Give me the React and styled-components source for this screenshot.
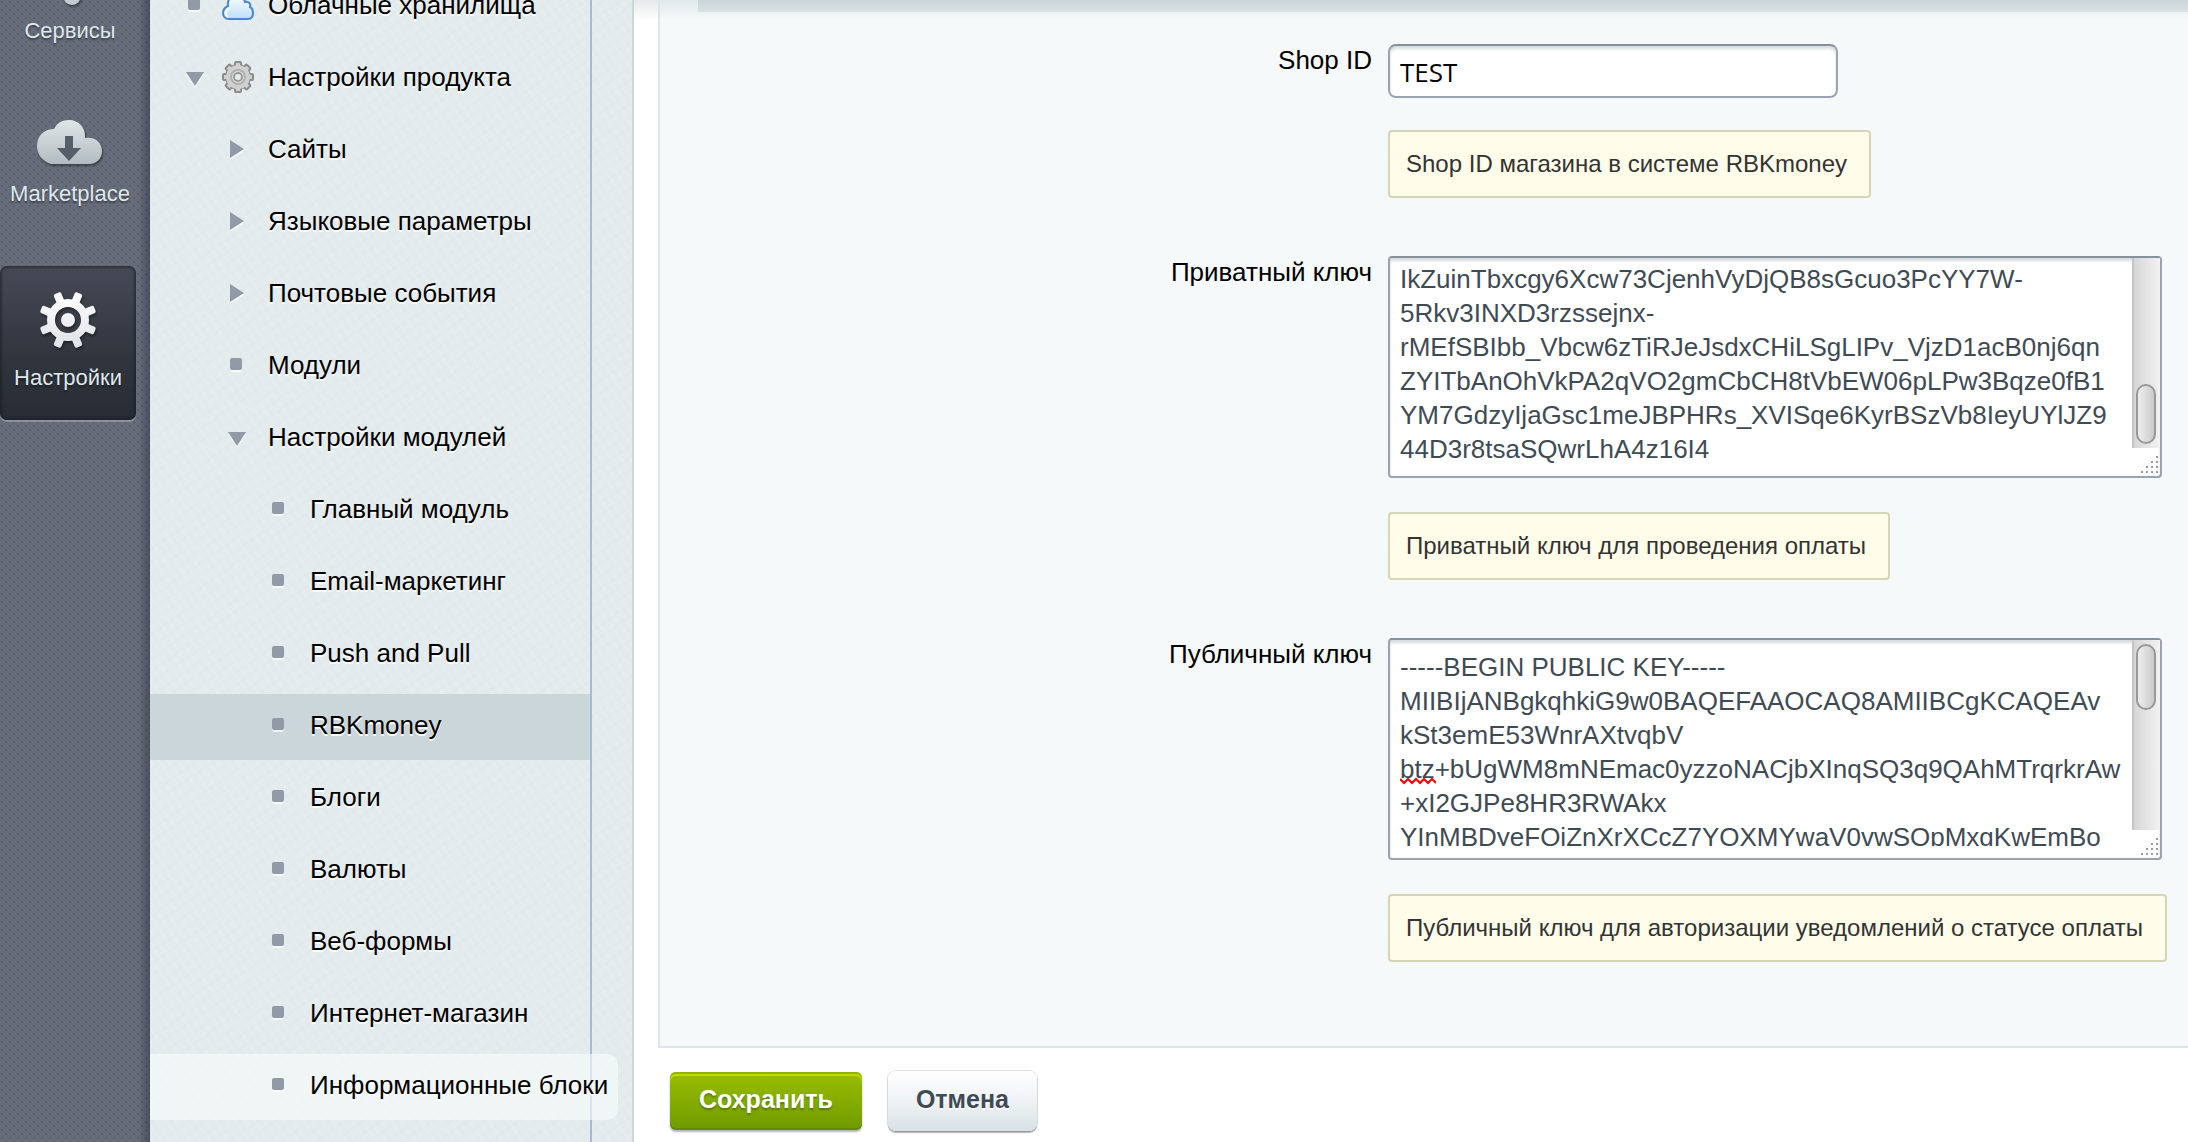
import React from "react";
import styled, { createGlobalStyle, css } from "styled-components";

const sans = '"Liberation Sans", Arial, sans-serif';

const GlobalStyle = createGlobalStyle`
  *, *::before, *::after { box-sizing: border-box; }
  html, body { margin: 0; background: #fff; overflow: hidden; }
  body { font-family: ${sans}; font-size: 26px; color: #000; }
  ul { margin: 0; padding: 0; list-style: none; }
  a { color: inherit; text-decoration: none; }
`;

const Page = styled.div`
  display: flex;
  height: 100vh;
  overflow: hidden;
`;

/* Section rail */

const Rail = styled.nav`
  flex: none;
  width: 150px;
  overflow: hidden;
  background-color: #666c7a;
  background-image:
    linear-gradient(to left, rgba(40, 45, 60, 0.45), rgba(40, 45, 60, 0) 12px),
    radial-gradient(circle at 2px 2px, #5a5f6c 1px, transparent 1px),
    radial-gradient(circle at 6px 6px, #5a5f6c 1px, transparent 1px);
  background-size: 100% 100%, 8px 8px, 8px 8px;
`;

const RailList = styled.ul`
  display: flex;
  flex-direction: column;
  gap: 30px;
  margin-top: -60px;
`;

const RailLink = styled.a`
  display: flex;
  flex-direction: column;
  align-items: center;
  gap: 16px;
  width: 140px;
  padding: 17px 0 28px;
  color: #dfe8ec;
  font-size: 22px;
  line-height: 28px;
  text-shadow: 0 2px 2px rgba(0, 0, 0, 0.4);

  svg {
    display: block;
    overflow: visible;
    filter: drop-shadow(1px 2px 1px rgba(0, 0, 0, 0.4));
  }

  ${({ $active }) => $active && css`
    width: 136px;
    padding-top: 26px;
    border-radius: 7px;
    background: linear-gradient(#454a56, #30343d 62%, #272b33);
    box-shadow: inset 0 0 2px 2px rgba(25, 28, 36, 0.5), 0 2px 0 #8e949f;
  `}
`;

/* Tree */

const Sidebar = styled.nav`
  flex: none;
  display: flex;
  width: 484px;
  overflow: hidden;
  border-right: 2px solid #cbd7d9;
  background-color: #e3ebed;
  background-image:
    repeating-linear-gradient(55deg, rgba(255, 255, 255, 0.08) 0 3px, transparent 3px 8px),
    repeating-linear-gradient(-35deg, rgba(200, 214, 214, 0.07) 0 3px, transparent 3px 10px);
`;

const Tree = styled.ul`
  display: flex;
  flex-direction: column;
  gap: 6px;
  width: 442px;
  margin-top: -26px;
  border-right: 2px solid #a3bccf;
`;

const rowState = {
  selected: css`background: #cbd6da;`,
  hovered: css`
    margin-right: -28px;
    border-radius: 0 10px 10px 0;
    background: rgba(249, 251, 252, 0.62);
  `,
};

const TreeLink = styled.a`
  display: flex;
  align-items: center;
  height: 66px;
  padding: 0 0 4px ${({ $level }) => 36 + 42 * $level}px;
  line-height: 34px;
  white-space: nowrap;
  text-shadow: 0 2px 0 #fff;
  ${({ $state }) => rowState[$state]}
`;

const Marker = styled.svg`
  flex: none;
  width: 18px;
  height: 18px;
  margin-right: 18px;
  overflow: visible;
  fill: #929aa7;
  filter: drop-shadow(0 2px 0 rgba(255, 255, 255, 0.7));
`;

const RowIcon = styled.svg`
  flex: none;
  width: 32px;
  height: 32px;
  margin-right: 10px;
`;

const RowText = styled.span`
  padding-left: 4px;
`;

/* Settings form */

const Content = styled.main`
  flex: 1;
  min-width: 0;
  padding-left: 24px;
  background: linear-gradient(#e6e9ea, #fff 20px);
`;

const Panel = styled.section`
  border: solid #dbe6eb;
  border-width: 0 0 2px 2px;
  background: linear-gradient(#e2e9eb, #f5f9f9 20px);
`;

const PanelBand = styled.div`
  height: 12px;
  margin-left: 38px;
  background: linear-gradient(#cad5d8, #d9e2e4);
`;

const Fields = styled.div`
  display: flex;
  flex-direction: column;
  gap: 58px;
  padding: 32px 0 84px;
`;

const FieldRow = styled.div`
  display: grid;
  grid-template-columns: minmax(0, 1fr) 800px;
`;

const FieldLabel = styled.label`
  padding-right: 16px;
  line-height: 32px;
  text-align: right;
`;

const FieldBody = styled.div`
  display: flex;
  flex-direction: column;
  align-items: flex-start;
`;

const frame = css`
  border: 2px solid #9ba3b1;
  border-top-color: #87909e;
  background: #fff;
  box-shadow: inset 0 3px 3px rgba(120, 130, 140, 0.28);
`;

const TextInput = styled.input`
  ${frame}
  width: 450px;
  height: 54px;
  margin-bottom: 32px;
  padding: 2px 10px 0;
  border-radius: 8px;
  color: #000;
  font: 26px "Open Sans", "Noto Sans", sans-serif;
  outline: none;
`;

const AreaFrame = styled.div`
  ${frame}
  position: relative;
  width: 774px;
  height: 222px;
  margin-bottom: 34px;
  padding-right: 28px;
  border-radius: 4px;
`;

const Area = styled.textarea`
  display: block;
  width: 100%;
  height: 206px;
  padding: ${({ $scrolled }) => ($scrolled ? 4 : 10)}px 0 0 10px;
  border: 0;
  background: transparent;
  color: #3f4b54;
  font: 26px/34px ${sans};
  white-space: pre;
  overflow: hidden;
  resize: none;
  outline: none;
`;

const ScrollTrack = styled.div`
  position: absolute;
  top: 0;
  right: 0;
  display: flex;
  align-items: ${({ $scrolled }) => ($scrolled ? "flex-end" : "flex-start")};
  width: 28px;
  height: 190px;
  padding: 4px;
  background: linear-gradient(to right, #c6c6c6 2px, #d6d6d6 2px, #f2f2f2);
`;

const ScrollThumb = styled.div`
  width: 20px;
  height: ${({ $scrolled }) => ($scrolled ? 60 : 66)}px;
  border: 2px solid #989898;
  border-radius: 10px;
  background: linear-gradient(to right, #eee, #cbcbcb);
`;

const Grip = styled.svg`
  position: absolute;
  right: 1px;
  bottom: 2px;
  width: 20px;
  height: 20px;
  fill: #9a9a9a;
`;

const Squiggle = styled.svg`
  position: absolute;
  top: 137px;
  left: 10px;
  width: 36px;
  height: 8px;
  fill: none;
  stroke: #f00;
  stroke-width: 2px;
`;

const Note = styled.p`
  margin: 0;
  padding: 16px 22px 16px 16px;
  border: 2px solid #d7d5b8;
  border-radius: 4px;
  background: #fffde9;
  color: #333;
  font-size: 24px;
  line-height: 32px;
  white-space: nowrap;
`;

const Actions = styled.div`
  display: flex;
  align-items: center;
  gap: 26px;
  padding: 23px 0 0 12px;
`;

const Button = styled.button`
  height: 60px;
  padding: 0 28px 4px;
  border: 0;
  border-radius: 8px;
  background: linear-gradient(#fff, #f1f4f6 45%, #d8e1e6);
  box-shadow: 0 0 0 1px rgba(0, 0, 0, 0.12), 0 2px 1px rgba(0, 0, 0, 0.3);
  color: #3f4b54;
  font: bold 25px ${sans};
  text-shadow: 0 2px 0 rgba(255, 255, 255, 0.7);

  ${({ $primary }) => $primary && css`
    height: 58px;
    padding: 0 29px 4px;
    border-radius: 6px;
    background: linear-gradient(#9bbe00, #6f9b00);
    box-shadow: inset 0 2px 0 #93b300, inset 0 4px 0 #c3db00, inset 0 -2px 0 #648a00,
      0 2px 2px rgba(0, 0, 0, 0.3);
    color: #fff;
    text-shadow: 0 2px 2px rgba(60, 90, 0, 0.6);
  `}
`;

/* Drawings */

const teeth = [0, 45, 90, 135, 180, 225, 270, 315];

function MarketIcon() {
  return (
    <svg width="66" height="44" viewBox="0 0 66 44" aria-hidden="true">
      <defs>
        <linearGradient id="market" gradientUnits="userSpaceOnUse" x1="0" y1="0" x2="0" y2="44">
          <stop offset="0" stopColor="#e0e6e8" />
          <stop offset="1" stopColor="#b2bcc0" />
        </linearGradient>
      </defs>
      <path
        d="M14 44C5 41 0 34 0 26C0 16 7 9 17 9C20 3 25 0 32 0C42 0 49 8 48 18C58 16 65 23 65 31C65 38 60 44 52 44Z"
        fill="url(#market)"
      />
      <path d="M28 16h8v12h8L32 41 20 28h8z" fill="#565d6b" />
    </svg>
  );
}

function ServicesIcon() {
  return (
    <svg width="60" height="44" viewBox="0 0 60 44" aria-hidden="true">
      <circle cx="32" cy="39" r="9" fill="#c3cbcf" />
    </svg>
  );
}

function SettingsIcon() {
  return (
    <svg width="56" height="56" viewBox="-28 -28 56 56" aria-hidden="true">
      <defs>
        <linearGradient id="cog" gradientUnits="userSpaceOnUse" x1="0" y1="-28" x2="0" y2="28">
          <stop offset="0" stopColor="#fff" />
          <stop offset="1" stopColor="#dfe3e7" />
        </linearGradient>
        <mask id="cogMask">
          <g fill="#fff">
            <circle r="21" />
            {teeth.map((a) => (
              <rect key={a} x="-4" y="-29" width="8" height="14" rx="2" transform={`rotate(${a + 22.5})`} />
            ))}
          </g>
          <circle r="10" fill="none" stroke="#000" strokeWidth="6" />
        </mask>
      </defs>
      <rect x="-30" y="-30" width="60" height="60" fill="url(#cog)" mask="url(#cogMask)" />
    </svg>
  );
}

function SmallCogIcon() {
  return (
    <RowIcon viewBox="-16 -16 32 32" aria-hidden="true">
      <g fill="#8c8c8c">
        <circle r="13" />
        {teeth.map((a) => (
          <rect key={a} x="-4" y="-16" width="8" height="10" rx="2" transform={`rotate(${a})`} />
        ))}
      </g>
      <g fill="#d0d0d0">
        <circle r="12" />
        {teeth.map((a) => (
          <rect key={a} x="-2" y="-14" width="4" height="8" transform={`rotate(${a})`} />
        ))}
      </g>
      <circle r="7" fill="#dedede" stroke="#b0b0b0" strokeWidth="2" />
      <circle r="4" fill="#e6edef" stroke="#999" strokeWidth="2" />
    </RowIcon>
  );
}

function SmallCloudIcon() {
  return (
    <RowIcon viewBox="0 0 32 32" aria-hidden="true">
      <defs>
        <linearGradient id="sky" x1="0" y1="0" x2="0" y2="1">
          <stop offset="0" stopColor="#fff" />
          <stop offset="1" stopColor="#b9e0fb" />
        </linearGradient>
      </defs>
      <path
        d="M7 30 C3 30 1 27 1 24 C1 20 4 18 6 17 C5 11 9 6 14 6 C19 6 22 9 23 13 C27 12 29 15 28 18 C30 19 31 21 31 24 C31 28 29 30 26 30 Z"
        fill="url(#sky)"
        stroke="#4a86d2"
        strokeWidth="2"
      />
      <path d="M6 28 C3 26 3 21 7 19" fill="none" stroke="#fff" strokeWidth="2" />
    </RowIcon>
  );
}

function TreeMarker({ kind }) {
  return (
    <Marker viewBox="0 0 18 18" aria-hidden="true">
      {kind === "dot" && <rect x="2" y="2" width="12" height="12" rx="2" />}
      {kind === "closed" && <path d="M2 0 L16 9 L2 18 Z" />}
      {kind === "open" && <path d="M0 4 H18 L9 18 Z" />}
    </Marker>
  );
}

/* Data */

const sections = [
  { text: "Сервисы", Icon: ServicesIcon },
  { text: "Marketplace", Icon: MarketIcon },
  { text: "Настройки", Icon: SettingsIcon, active: true },
];

const tree = [
  { text: "Облачные хранилища", level: 0, kind: "dot", Icon: SmallCloudIcon },
  { text: "Настройки продукта", level: 0, kind: "open", Icon: SmallCogIcon },
  { text: "Сайты", level: 1, kind: "closed" },
  { text: "Языковые параметры", level: 1, kind: "closed" },
  { text: "Почтовые события", level: 1, kind: "closed" },
  { text: "Модули", level: 1, kind: "dot" },
  { text: "Настройки модулей", level: 1, kind: "open" },
  { text: "Главный модуль", level: 2, kind: "dot" },
  { text: "Email-маркетинг", level: 2, kind: "dot" },
  { text: "Push and Pull", level: 2, kind: "dot" },
  { text: "RBKmoney", level: 2, kind: "dot", state: "selected" },
  { text: "Блоги", level: 2, kind: "dot" },
  { text: "Валюты", level: 2, kind: "dot" },
  { text: "Веб-формы", level: 2, kind: "dot" },
  { text: "Интернет-магазин", level: 2, kind: "dot" },
  { text: "Информационные блоки", level: 2, kind: "dot", state: "hovered" },
];

const privateKey = [
  "IkZuinTbxcgy6Xcw73CjenhVyDjQB8sGcuo3PcYY7W-",
  "5Rkv3INXD3rzssejnx-",
  "rMEfSBIbb_Vbcw6zTiRJeJsdxCHiLSgLIPv_VjzD1acB0nj6qn",
  "ZYITbAnOhVkPA2qVO2gmCbCH8tVbEW06pLPw3Bqze0fB1",
  "YM7GdzyIjaGsc1meJBPHRs_XVISqe6KyrBSzVb8IeyUYlJZ9",
  "44D3r8tsaSQwrLhA4z16I4",
].join("\n");

const publicKey = [
  "-----BEGIN PUBLIC KEY-----",
  "MIIBIjANBgkqhkiG9w0BAQEFAAOCAQ8AMIIBCgKCAQEAv",
  "kSt3emE53WnrAXtvqbV",
  "btz+bUgWM8mNEmac0yzzoNACjbXInqSQ3q9QAhMTrqrkrAw",
  "+xI2GJPe8HR3RWAkx",
  "YInMBDyeFQiZnXrXCcZ7YOXMYwaV0vwSOpMxgKwEmBo",
].join("\n");

function Field({ id, label, note, children }) {
  return (
    <FieldRow>
      <FieldLabel htmlFor={id}>{label}</FieldLabel>
      <FieldBody>
        {children}
        <Note>{note}</Note>
      </FieldBody>
    </FieldRow>
  );
}

const gripDots = [[0, 3], [1, 2], [1, 3], [2, 1], [2, 2], [2, 3], [3, 0], [3, 1], [3, 2], [3, 3]];

function KeyArea({ id, value, scrolled, children }) {
  return (
    <AreaFrame>
      <Area id={id} defaultValue={value} spellCheck={false} $scrolled={scrolled} />
      {children}
      <ScrollTrack $scrolled={scrolled}>
        <ScrollThumb $scrolled={scrolled} />
      </ScrollTrack>
      <Grip viewBox="0 0 20 20" aria-hidden="true">
        {gripDots.map(([x, y]) => (
          <rect key={`${x}${y}`} x={x * 5 + 2} y={y * 5 + 2} width="2" height="2" />
        ))}
      </Grip>
    </AreaFrame>
  );
}

export default function App() {
  return (
    <>
      <GlobalStyle />
      <Page>
        <Rail>
          <RailList>
            {sections.map(({ text, Icon, active }) => (
              <li key={text}>
                <RailLink href="#" $active={active}>
                  <Icon />
                  {text}
                </RailLink>
              </li>
            ))}
          </RailList>
        </Rail>
        <Sidebar>
          <Tree>
            {tree.map(({ text, level, kind, state, Icon }) => (
              <li key={text}>
                <TreeLink href="#" $level={level} $state={state}>
                  <TreeMarker kind={kind} />
                  {Icon && <Icon />}
                  <RowText>{text}</RowText>
                </TreeLink>
              </li>
            ))}
          </Tree>
        </Sidebar>
        <Content>
          <Panel>
            <PanelBand />
            <Fields>
              <Field id="shop" label="Shop ID" note="Shop ID магазина в системе RBKmoney">
                <TextInput id="shop" type="text" defaultValue="TEST" />
              </Field>
              <Field id="private" label="Приватный ключ" note="Приватный ключ для проведения оплаты">
                <KeyArea id="private" value={privateKey} scrolled />
              </Field>
              <Field
                id="public"
                label="Публичный ключ"
                note="Публичный ключ для авторизации уведомлений о статусе оплаты"
              >
                <KeyArea id="public" value={publicKey}>
                  <Squiggle viewBox="0 0 36 8" aria-hidden="true">
                    <path d="M0 2 L4 6 L8 2 L12 6 L16 2 L20 6 L24 2 L28 6 L32 2 L36 6" />
                  </Squiggle>
                </KeyArea>
              </Field>
            </Fields>
          </Panel>
          <Actions>
            <Button type="button" $primary>Сохранить</Button>
            <Button type="button">Отмена</Button>
          </Actions>
        </Content>
      </Page>
    </>
  );
}
